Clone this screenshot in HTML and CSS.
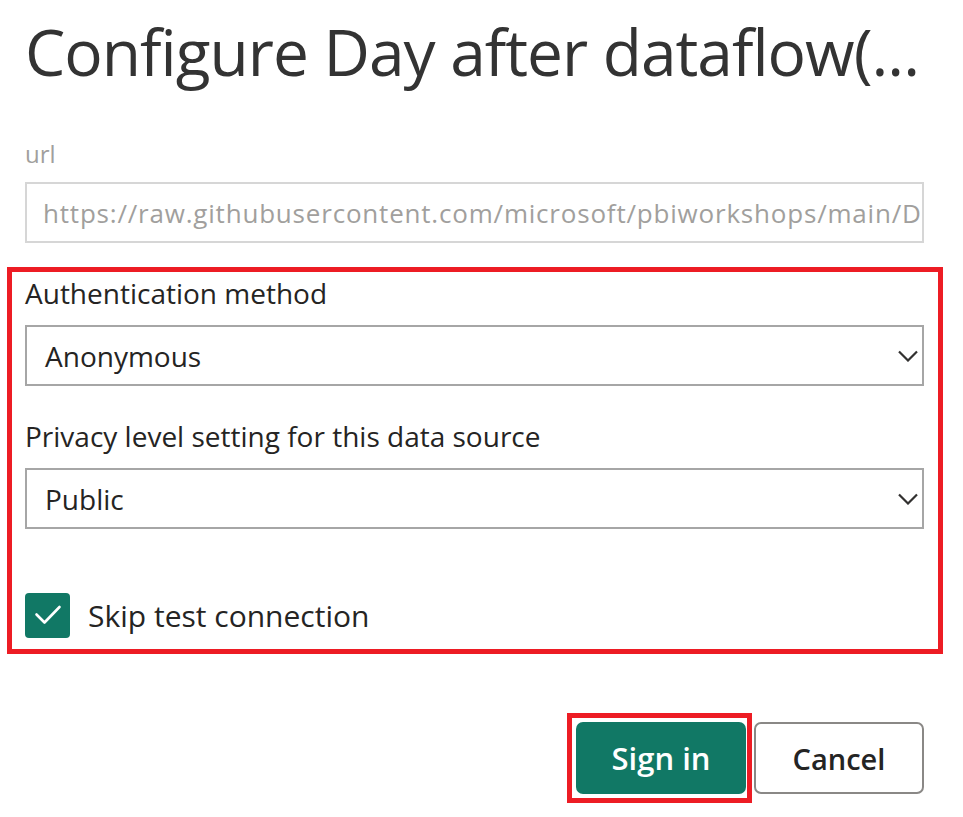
FILE: index.html
```html
<!DOCTYPE html>
<html lang="en">
<head>
<meta charset="utf-8">
<title>Configure connection</title>
<link rel="stylesheet" href="styles.css">
</head>
<body>
<div class="dialog">
  <h1 class="title">Configure Day after dataflow(...</h1>
  <div class="field">
    <div class="label label-muted">url</div>
    <div class="input input-disabled"><span class="input-text">https://raw.githubusercontent.com/microsoft/pbiworkshops/main/Day%20After%20Dashboard/</span></div>
  </div>
  <div class="highlight">
    <div class="field">
      <div class="label">Authentication method</div>
      <div class="select">
        <span class="select-value">Anonymous</span>
        <svg class="chevron" width="20" height="12" viewBox="0 0 20 12"><path d="M1 1.5 L10 10.5 L19 1.5" fill="none" stroke="#323130" stroke-width="2.2"/></svg>
      </div>
    </div>
    <div class="field field-second">
      <div class="label">Privacy level setting for this data source</div>
      <div class="select">
        <span class="select-value">Public</span>
        <svg class="chevron" width="20" height="12" viewBox="0 0 20 12"><path d="M1 1.5 L10 10.5 L19 1.5" fill="none" stroke="#323130" stroke-width="2.2"/></svg>
      </div>
    </div>
    <div class="check-row">
      <span class="checkbox">
        <svg width="45" height="45" viewBox="0 0 45 45"><path d="M11.5 21.5 L19.5 29.5 L34.5 14" fill="none" stroke="#ffffff" stroke-width="2.6" stroke-linecap="round" stroke-linejoin="round"/></svg>
      </span>
      <span class="check-label">Skip test connection</span>
    </div>
  </div>
  <div class="actions">
    <div class="btn-highlight"><button class="btn btn-primary">Sign in</button></div>
    <button class="btn btn-secondary">Cancel</button>
  </div>
</div>
</body>
</html>
```
FILE: styles.css
```css
html, body {
  margin: 0;
  padding: 0;
  background: #ffffff;
}
body {
  font-family: "Open Sans", "Noto Sans", sans-serif;
  color: #252423;
}
.dialog {
  width: 899px;
  padding: 12px 0 0 25px;
}
.title {
  margin: 0;
  font-size: 64px;
  line-height: 80px;
  font-weight: 400;
  color: #333333;
  white-space: nowrap;
  letter-spacing: -1px;
}
.field {
  display: flex;
  flex-direction: column;
}
.label {
  font-size: 28px;
  line-height: 36px;
  color: #252423;
  margin-bottom: 14px;
}
.label-muted {
  font-size: 24px;
  line-height: 30px;
  color: #a19f9d;
  margin-top: 47px;
  margin-bottom: 13px;
}
.input {
  box-sizing: border-box;
  height: 61px;
  border: 2px solid #d6d6d6;
  padding: 0 0 0 16px;
  display: flex;
  align-items: center;
  overflow: hidden;
}
.input-text {
  font-size: 26px;
  line-height: 34px;
  letter-spacing: 0.8px;
  white-space: nowrap;
}
.input-disabled {
  color: #a19f9d;
}
.highlight {
  margin: 24px -19px 0 -18px;
  border: 5px solid #ed1c24;
  padding: 3px 14px 11px 13px;
}
.field-second {
  margin-top: 32px;
}
.select {
  box-sizing: border-box;
  height: 61px;
  border: 2px solid #a6a6a6;
  display: flex;
  align-items: center;
  justify-content: space-between;
  padding: 0 4px 0 18px;
}
.select-value {
  font-size: 28px;
  line-height: 36px;
  color: #252423;
}
.chevron {
  display: block;
}
.check-row {
  display: flex;
  align-items: center;
  gap: 18px;
  margin-top: 64px;
}
.checkbox {
  width: 45px;
  height: 45px;
  border-radius: 4px;
  background: #117865;
  display: block;
}
.checkbox svg {
  display: block;
}
.check-label {
  font-size: 30px;
  line-height: 36px;
  color: #252423;
}
.actions {
  display: flex;
  justify-content: flex-end;
  align-items: center;
  gap: 2px;
  margin-top: 59px;
}
.btn-highlight {
  border: 5px solid #ed1c24;
  padding: 4px 1px 4px 4px;
  display: flex;
}
.btn {
  box-sizing: border-box;
  width: 170px;
  height: 72px;
  font-family: "Open Sans", "Noto Sans", sans-serif;
  font-size: 29px;
  font-weight: 600;
  border-radius: 7px;
  cursor: pointer;
  padding: 0;
}
.btn-primary {
  background: #117865;
  color: #ffffff;
  border: none;
  font-size: 31px;
}
.btn-secondary {
  background: #ffffff;
  color: #242424;
  border: 2px solid #8a8886;
}
```
